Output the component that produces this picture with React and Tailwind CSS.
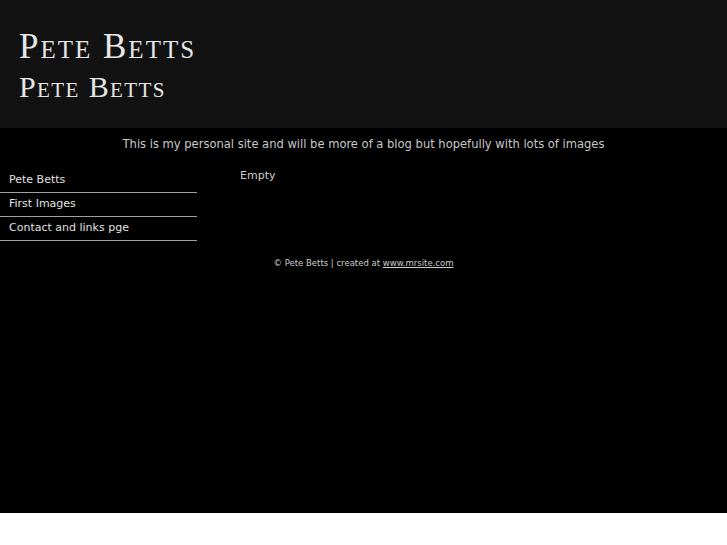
export default function App() {
  return (
    <div className="w-[727px] h-[513px] bg-black">
      <div className="h-[128px] bg-[#121212] pt-[27px] pl-[19px] text-[#e6e6e6]" style={{ fontFamily: '"Liberation Serif", serif' }}>
        <div className="text-[35px] leading-[40px] tracking-[2px] [font-variant:small-caps]">Pete Betts</div>
        <div className="text-[30px] leading-[40px] tracking-[1.4px] [font-variant:small-caps]">Pete Betts</div>
      </div>
      <div className="text-center text-[12.8px] text-[#c8c8c8] pt-[7px] leading-[17px] [font-stretch:condensed]" style={{ fontFamily: '"DejaVu Sans Condensed", "DejaVu Sans", sans-serif' }}>
        This is my personal site and will be more of a blog but hopefully with lots of images
      </div>
      <div className="flex mt-[17px]" style={{ fontFamily: '"DejaVu Sans", sans-serif' }}>
        <div className="w-[197px] text-[11px] text-[#e0e0e0]">
          {['Pete Betts', 'First Images', 'Contact and links pge'].map((t) => (
            <div key={t} className="h-[24px] pl-[9px] flex items-center border-b border-[#a0a0a0]">{t}</div>
          ))}
        </div>
        <div className="pl-[43px] text-[11px] text-[#cfcfcf] -mt-[1px]">Empty</div>
      </div>
      <div className="text-center text-[8.5px] text-[#cccccc] mt-[16px]" style={{ fontFamily: '"DejaVu Sans", sans-serif' }}>
        © Pete Betts | created at <span className="underline">www.mrsite.com</span>
      </div>
    </div>
  );
}
